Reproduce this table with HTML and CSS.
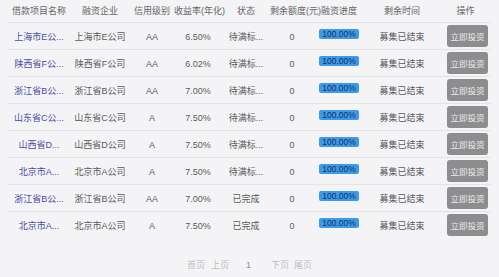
FILE: index.html
```html
<!DOCTYPE html>
<html lang="zh">
<head>
<meta charset="utf-8">
<link rel="stylesheet" href="styles.css">
</head>
<body>
<div class="table">
  <div class="row head">
    <div>借款项目名称</div><div>融资企业</div><div>信用级别</div><div>收益率(年化)</div><div>状态</div><div>剩余额度(元)</div><div>融资进度</div><div>剩余时间</div><div>操作</div>
  </div>
  <div class="row">
    <div class="link">上海市E公...</div><div>上海市E公司</div><div>AA</div><div>6.50%</div><div>待满标...</div><div>0</div><div><span class="badge">100.00%</span></div><div>募集已结束</div><div><span class="btn">立即投资</span></div>
  </div>
  <div class="row">
    <div class="link">陕西省F公...</div><div>陕西省F公司</div><div>AA</div><div>6.02%</div><div>待满标...</div><div>0</div><div><span class="badge">100.00%</span></div><div>募集已结束</div><div><span class="btn">立即投资</span></div>
  </div>
  <div class="row">
    <div class="link">浙江省B公...</div><div>浙江省B公司</div><div>AA</div><div>7.00%</div><div>待满标...</div><div>0</div><div><span class="badge">100.00%</span></div><div>募集已结束</div><div><span class="btn">立即投资</span></div>
  </div>
  <div class="row">
    <div class="link">山东省C公...</div><div>山东省C公司</div><div>A</div><div>7.50%</div><div>待满标...</div><div>0</div><div><span class="badge">100.00%</span></div><div>募集已结束</div><div><span class="btn">立即投资</span></div>
  </div>
  <div class="row">
    <div class="link">山西省D...</div><div>山西省D公司</div><div>A</div><div>7.50%</div><div>待满标...</div><div>0</div><div><span class="badge">100.00%</span></div><div>募集已结束</div><div><span class="btn">立即投资</span></div>
  </div>
  <div class="row">
    <div class="link">北京市A...</div><div>北京市A公司</div><div>A</div><div>7.50%</div><div>待满标...</div><div>0</div><div><span class="badge">100.00%</span></div><div>募集已结束</div><div><span class="btn">立即投资</span></div>
  </div>
  <div class="row">
    <div class="link">浙江省B公...</div><div>浙江省B公司</div><div>AA</div><div>7.00%</div><div>已完成</div><div>0</div><div><span class="badge">100.00%</span></div><div>募集已结束</div><div><span class="btn">立即投资</span></div>
  </div>
  <div class="row">
    <div class="link">北京市A...</div><div>北京市A公司</div><div>A</div><div>7.50%</div><div>已完成</div><div>0</div><div><span class="badge">100.00%</span></div><div>募集已结束</div><div><span class="btn">立即投资</span></div>
  </div>
</div>
<div class="pager">
  <span class="p">首页</span><span class="p gap">上页</span><span class="cur">1</span><span class="p">下页</span><span class="p tight">尾页</span>
</div>
</body>
</html>
```

FILE: styles.css
```css
html, body {
  margin: 0;
  padding: 0;
  background: #f4f4f6;
}
body {
  font-family: "Liberation Sans", "Noto Sans CJK SC", sans-serif;
  font-size: 9px;
  color: #5a5a5a;
  width: 499px;
  height: 277px;
  overflow: hidden;
}
.table {
  margin: 0 8px;
}
.row {
  display: grid;
  grid-template-columns: 62px 60px 44px 48px 48px 44px 50px 76px 51px;
  height: 27px;
  border-top: 1px solid #e4e4e7;
  box-sizing: border-box;
  align-items: center;
}
.row > div {
  text-align: center;
  white-space: nowrap;
  line-height: 12px;
  padding-top: 2px;
}
.row.head {
  height: 22px;
  border-top: none;
  color: #666;
}
.row.head > div {
  padding-top: 0;
}
.link {
  color: #4b4aa6;
}
.badge {
  display: inline-block;
  background: #3d9ae8;
  color: #14305c;
  border-radius: 2px;
  padding: 0 3px;
  height: 10px;
  line-height: 10px;
  font-size: 8.5px;
  position: relative;
  top: -3px;
}
.btn {
  display: inline-block;
  background: #8d8d8f;
  color: #ececec;
  border-radius: 3px;
  width: 41px;
  height: 22px;
  line-height: 22px;
  font-size: 8.5px;
  font-family: "Noto Sans CJK SC", sans-serif;
  position: relative;
  top: -1px;
  left: 2px;
}
.pager {
  display: flex;
  justify-content: center;
  margin-top: 21px;
  color: #bdbdbf;
  line-height: 12px;
}
.p {
  margin: 0 3px;
}
.gap {
  margin-right: 17px;
}
.cur {
  color: #8a90a0;
  margin-right: 17px;
}
.tight {
  margin-left: 2px;
}
```
